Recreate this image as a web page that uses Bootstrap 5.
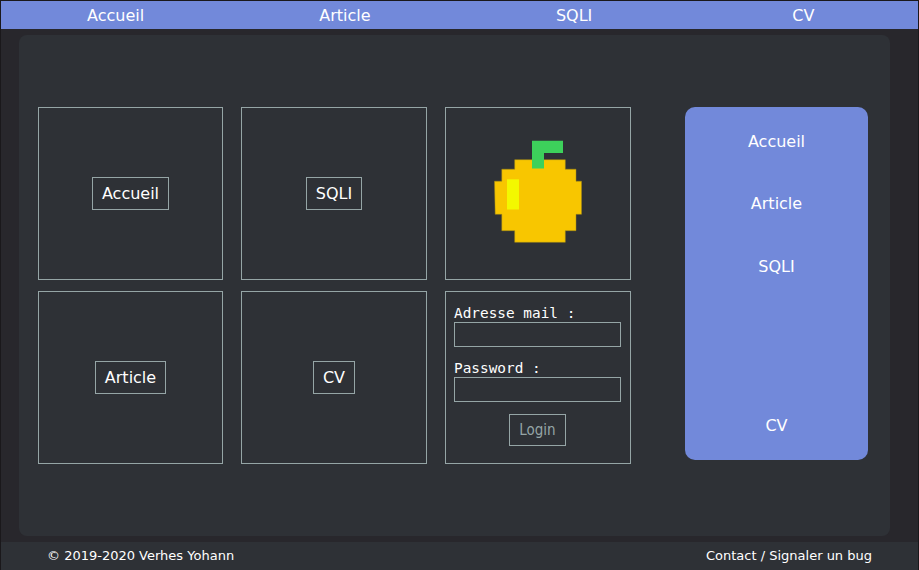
<!DOCTYPE html>
<html lang="fr">
<head>
<meta charset="utf-8">
<meta name="viewport" content="width=device-width, initial-scale=1">
<title>Verhes Yohann</title>
<link href="https://cdn.jsdelivr.net/npm/bootstrap@5.3.0/dist/css/bootstrap.min.css" rel="stylesheet">
<style>
:root { --blurple: #7289da; --panel: #2e3136; --line: #95a5a6; }
body { height: 570px; background: #28272c; color: #fff; font-family: "DejaVu Sans", sans-serif; font-size: 16px; border: 1px solid #1a181b; border-bottom: 0; }
a { color: #fff; text-decoration: none; }
.top-nav { height: 28px; padding-top: 2px; background: var(--blurple); }
.panel { height: 501px; margin: 6px 28px 6px 18px; padding: 72px 22px 0 19px; background: var(--panel); border-radius: 8px; }
.tiles { display: grid; grid-template-columns: 185px 186px 186px; grid-template-rows: 173px 173px; gap: 11px 18px; }
.tile { border: 1px solid var(--line); }
.tile-link { border: 1px solid var(--line); padding: 0 9px; height: 33px; line-height: 31px; }
.login { padding: 12px 9px 0 8px; font-family: "DejaVu Sans Mono", monospace; font-size: 14.4px; }
.login label { line-height: 18px; height: 18px; white-space: pre; }
.login input { height: 25px; width: 167px; background: transparent; border: 1px solid var(--line); border-radius: 0; color: #fff; }
.login .btn-login { width: 57px; height: 32px; background: transparent; border: 1px solid var(--line); border-radius: 0; color: var(--line); font: 15px/30px "DejaVu Sans Condensed", "DejaVu Sans", sans-serif; font-stretch: condensed; padding: 0; }
.login .field-gap { margin-bottom: 12px; }
.side { width: 183px; height: 353px; background: var(--blurple); border-radius: 10px; padding: 22.5px 0 22px; gap: 38.5px; line-height: 24px; }
.foot { height: 28px; background: var(--panel); font-size: 13px; padding: 0 46px; }
</style>
<script src="https://cdn.jsdelivr.net/npm/bootstrap@5.3.0/dist/js/bootstrap.bundle.min.js"></script>
</head>
<body class="overflow-hidden">
<nav class="top-nav row g-0 align-items-center text-center">
  <a class="col" href="#">Accueil</a>
  <a class="col" href="#">Article</a>
  <a class="col" href="#">SQLI</a>
  <a class="col" href="#">CV</a>
</nav>
<main class="panel d-flex justify-content-between align-items-start">
  <section class="tiles">
    <div class="tile d-flex justify-content-center align-items-center"><a class="tile-link" href="#">Accueil</a></div>
    <div class="tile d-flex justify-content-center align-items-center"><a class="tile-link" href="#">SQLI</a></div>
    <div class="tile">
      <svg width="184" height="171" viewBox="446 108 184 171" class="d-block" aria-hidden="true">
        <path fill="#f8c600" stroke="#a58a18" stroke-width=".5" d="M514.7 159.7H565.3V169.2H576V181.2H581.5V214.3H576V230.7H565.3V242.3H514.7V230.7H501.8V214.3H495.2L494.5 181.2H501.8V169.2H514.7Z"/>
        <path fill="#3dd15b" d="M532 140.8H563V153H544V168.5H532Z"/>
        <path fill="#f3f800" d="M507 179.3H519V209.5H507Z"/>
      </svg>
    </div>
    <div class="tile d-flex justify-content-center align-items-center"><a class="tile-link" href="#">Article</a></div>
    <div class="tile d-flex justify-content-center align-items-center"><a class="tile-link" href="#">CV</a></div>
    <form class="tile login d-flex flex-column">
      <label for="mail">Adresse mail :</label>
      <input id="mail" type="email" class="field-gap">
      <label for="pass">Password :</label>
      <input id="pass" type="password" class="field-gap">
      <button type="button" class="btn-login align-self-center">Login</button>
    </form>
  </section>
  <aside class="side d-flex flex-column align-items-center">
    <a href="#">Accueil</a>
    <a href="#">Article</a>
    <a href="#">SQLI</a>
    <a class="mt-auto" href="#">CV</a>
  </aside>
</main>
<footer class="foot d-flex justify-content-between align-items-center">
  <span>© 2019-2020 Verhes Yohann</span>
  <a href="#">Contact / Signaler un bug</a>
</footer>
</body>
</html>
